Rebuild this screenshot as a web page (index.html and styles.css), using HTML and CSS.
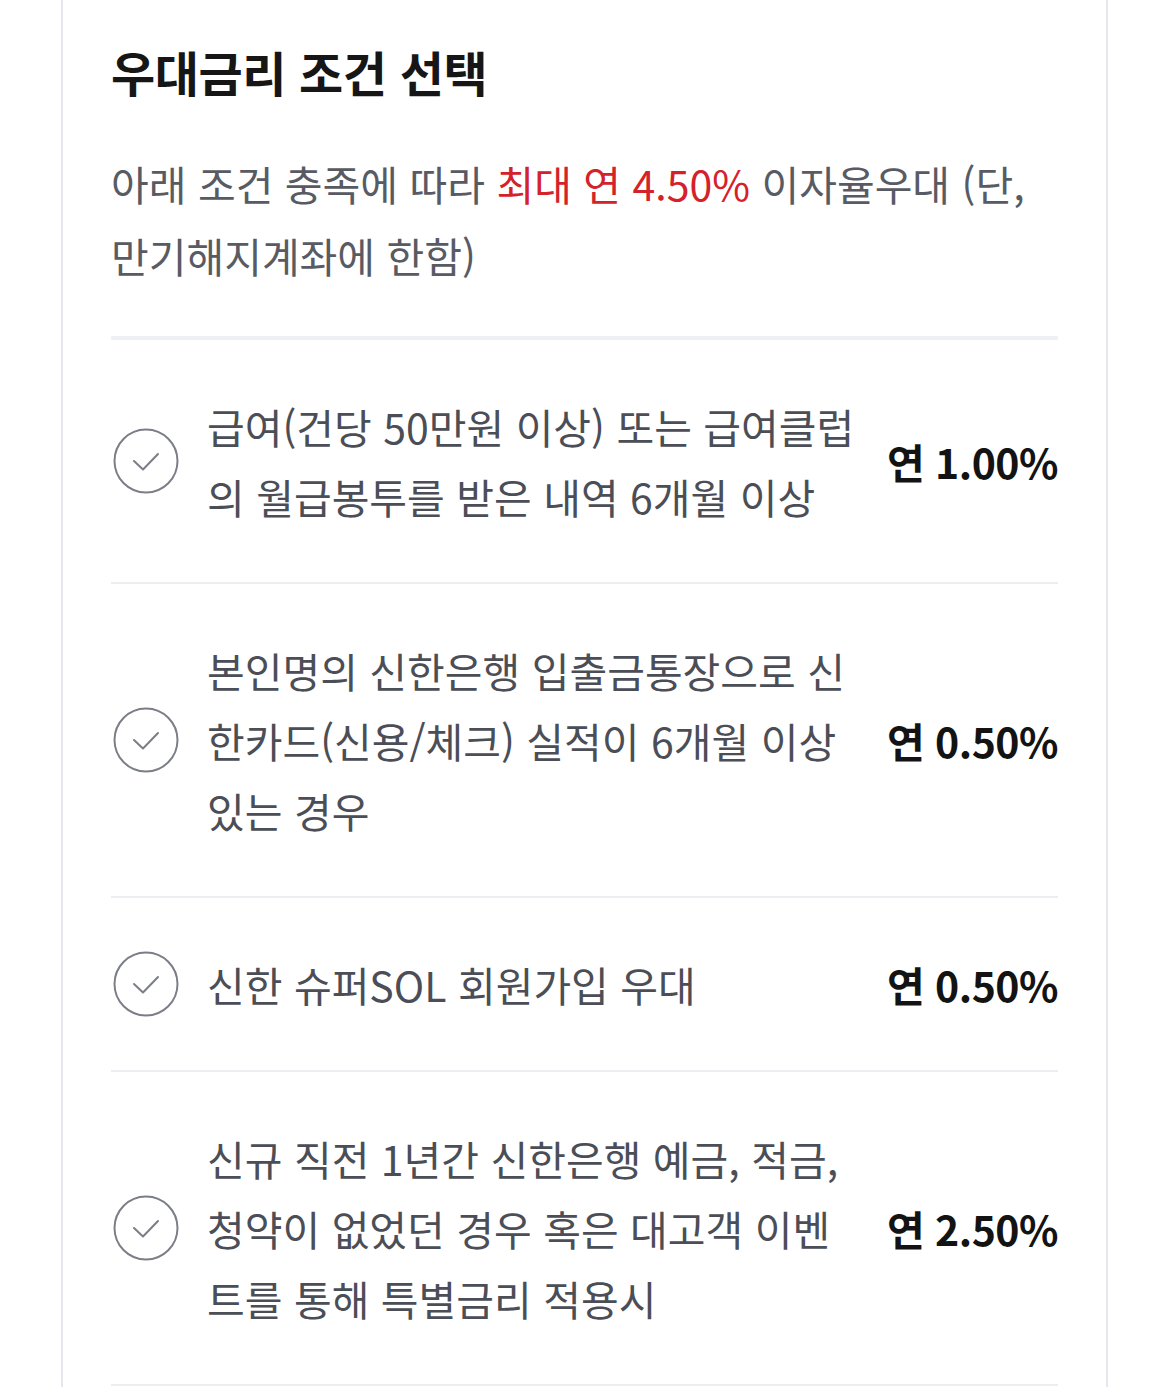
FILE: index.html
```html
<!DOCTYPE html>
<html lang="ko">
<head>
    <meta charset="UTF-8">
    <meta name="viewport" content="width=device-width, initial-scale=1.0">
    <title>우대금리 조건 선택</title>
    <link rel="stylesheet" href="styles.css">
</head>
<body>
    <div class="rate-card">
        <h2 class="rate-title">우대금리 조건 선택</h2>
        <p class="rate-desc">아래 조건 충족에 따라 <span class="highlight">최대 연 4.50%</span> 이자율우대 (단, 만기해지계좌에 한함)</p>

        <ul class="cond-list">
            <li class="cond-item">
                <span class="check-icon">
                    <svg width="66" height="66" viewBox="0 0 66 66"><circle cx="33" cy="33" r="31.5" fill="none" stroke="#7b7e86" stroke-width="2"/><path d="M21 33 L30 41.5 L45 26" fill="none" stroke="#7b7e86" stroke-width="2" stroke-linecap="round" stroke-linejoin="round"/></svg>
                </span>
                <span class="cond-text">급여(건당 50만원 이상) 또는 급여클럽의 월급봉투를 받은 내역 6개월 이상</span>
                <span class="cond-rate">연 1.00%</span>
            </li>
            <li class="cond-item">
                <span class="check-icon">
                    <svg width="66" height="66" viewBox="0 0 66 66"><circle cx="33" cy="33" r="31.5" fill="none" stroke="#7b7e86" stroke-width="2"/><path d="M21 33 L30 41.5 L45 26" fill="none" stroke="#7b7e86" stroke-width="2" stroke-linecap="round" stroke-linejoin="round"/></svg>
                </span>
                <span class="cond-text">본인명의 신한은행 입출금통장으로 신한카드(신용/체크) 실적이 6개월 이상 있는 경우</span>
                <span class="cond-rate">연 0.50%</span>
            </li>
            <li class="cond-item">
                <span class="check-icon">
                    <svg width="66" height="66" viewBox="0 0 66 66"><circle cx="33" cy="33" r="31.5" fill="none" stroke="#7b7e86" stroke-width="2"/><path d="M21 33 L30 41.5 L45 26" fill="none" stroke="#7b7e86" stroke-width="2" stroke-linecap="round" stroke-linejoin="round"/></svg>
                </span>
                <span class="cond-text">신한 슈퍼SOL 회원가입 우대</span>
                <span class="cond-rate">연 0.50%</span>
            </li>
            <li class="cond-item">
                <span class="check-icon">
                    <svg width="66" height="66" viewBox="0 0 66 66"><circle cx="33" cy="33" r="31.5" fill="none" stroke="#7b7e86" stroke-width="2"/><path d="M21 33 L30 41.5 L45 26" fill="none" stroke="#7b7e86" stroke-width="2" stroke-linecap="round" stroke-linejoin="round"/></svg>
                </span>
                <span class="cond-text">신규 직전 1년간 신한은행 예금, 적금, 청약이 없었던 경우 혹은 대고객 이벤트를 통해 특별금리 적용시</span>
                <span class="cond-rate">연 2.50%</span>
            </li>
        </ul>
    </div>
</body>
</html>
```

FILE: styles.css
```css
body {
    margin: 0;
    background: #ffffff;
    font-family: "Noto Sans CJK KR", "Noto Sans", sans-serif;
}

.rate-card {
    margin-left: 61px;
    width: 947px;
    min-height: 1387px;
    padding: 40px 48px 0;
    border-left: 2px solid #e6e7ec;
    border-right: 2px solid #e6e7ec;
}

.rate-title {
    margin: 0;
    font-size: 48px;
    line-height: 62px;
    font-weight: 700;
    color: #161616;
    letter-spacing: -0.4px;
}

.rate-desc {
    margin: 45px 0 0;
    font-size: 41px;
    line-height: 72px;
    color: #585b63;
    padding-bottom: 45px;
    border-bottom: 4px solid #eef0f4;
}

.highlight {
    color: #d4222b;
}

.cond-list {
    list-style: none;
    margin: 0;
    padding: 0;
}

.cond-item {
    display: flex;
    align-items: center;
    padding: 51px 0;
    border-bottom: 2px solid #eceef2;
}

.check-icon {
    flex: none;
    width: 66px;
    height: 66px;
    margin-left: 2px;
}

.check-icon svg {
    display: block;
}

.cond-text {
    width: 660px;
    margin-left: 28px;
    font-size: 41px;
    line-height: 70px;
    color: #4b4e56;
    word-break: break-all;
}

.cond-rate {
    margin-left: auto;
    font-size: 41px;
    font-weight: 700;
    color: #131313;
    letter-spacing: -0.5px;
    white-space: nowrap;
}
```
